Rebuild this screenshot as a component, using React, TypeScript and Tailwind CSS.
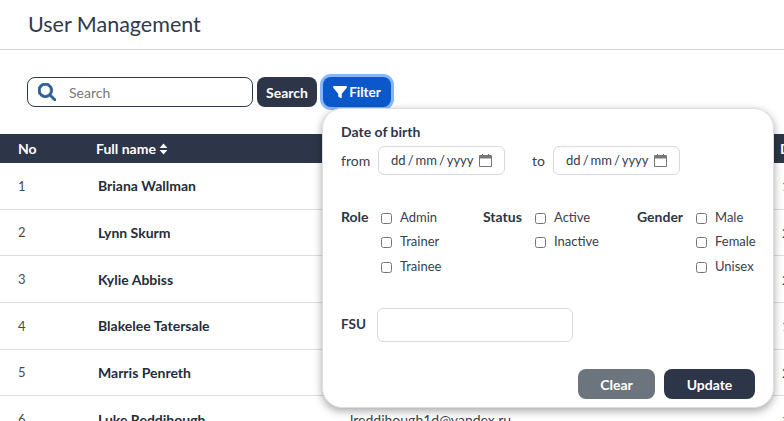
const rows = [
  { no: 1, name: 'Briana Wallman', email: '', last: '1' },
  { no: 2, name: 'Lynn Skurm', email: '', last: '2' },
  { no: 3, name: 'Kylie Abbiss', email: '', last: '2' },
  { no: 4, name: 'Blakelee Tatersale', email: '', last: '1' },
  { no: 5, name: 'Marris Penreth', email: '', last: '2' },
  { no: 6, name: 'Luke Reddihough', email: 'lreddihough1d@yandex.ru', last: '1' },
];

function SearchIcon() {
  return (
    <svg viewBox="0 0 512 512" className="w-[18px] h-[18px] fill-[#2f5f95]" stroke="#2f5f95" strokeWidth={24}>
      <path d="M416 208c0 45.900-14.900 88.300-40 122.700L502.600 457.400c12.500 12.500 12.500 32.800 0 45.300s-32.800 12.500-45.300 0L330.700 376c-34.400 25.200-76.800 40-122.700 40C93.100 416 0 322.900 0 208S93.100 0 208 0S416 93.100 416 208zM208 352a144 144 0 1 0 0-288 144 144 0 1 0 0 288z" />
    </svg>
  );
}

function FunnelIcon() {
  return (
    <svg viewBox="0 0 512 512" className="w-[14px] h-[14px] fill-white">
      <path d="M3.900 54.900C10.500 40.900 24.500 32 40 32h432c15.500 0 29.500 8.900 36.100 22.900s4.600 30.500-5.200 42.500L320 320.900V448c0 12.100-6.800 23.200-17.700 28.600s-23.800 4.300-33.500-3l-64-48c-8.100-6-12.800-15.500-12.800-25.600v-79.100L9 97.300C-.7 85.400-2.800 68.800 3.900 54.900z" />
    </svg>
  );
}

function SortIcon() {
  return (
    <svg viewBox="0 0 10 14" className="w-[9px] h-[12px] fill-white">
      <path d="M5 0.500 9.500 5.800H0.500z" />
      <path d="M5 13.500 0.500 8.200H9.500z" />
    </svg>
  );
}

function CalendarIcon() {
  return (
    <svg viewBox="0 0 13 13" className="w-[13px] h-[13px] ml-[5px] shrink-0">
      <path d="M3 0h1v2H3zM9 0h1v2H9z" fill="#666" />
      <path d="M0.500 1.500h12v11h-12z" fill="none" stroke="#777" />
      <path d="M1 2h11v2.500H1z" fill="#777" />
    </svg>
  );
}

function DateBox() {
  return (
    <div className="w-[127px] h-[29px] border border-[#d5d9e0] rounded-md flex items-center pl-[12px] text-[#333c4d] text-[13px] [word-spacing:-1.25px]">
      <span className="whitespace-pre">dd / mm / yyyy</span>
      <CalendarIcon />
    </div>
  );
}

function Check({ label }: { label: string }) {
  return (
    <label className="flex items-center h-[14px] text-[13px] text-[#39404f] whitespace-nowrap">
      <input type="checkbox" className="w-[11px] h-[11px] m-0 mr-[8px] shrink-0" />
      <span className="-mt-[1px]">{label}</span>
    </label>
  );
}

export default function App() {
  return (
    <div className="w-[784px] h-[421px] overflow-hidden bg-white font-['Lato',sans-serif] text-[#2d3648] relative">
      <header className="h-[50px] border-b border-[#d3d5d8] pl-[28px] flex items-center">
        <h1 className="text-[21.500px] text-[#2f3a4d]">User Management</h1>
      </header>

      <div className="flex items-center pl-[27px] pt-[27px] h-[84px] pb-[27px]">
        <div className="w-[226px] h-[30px] border border-[#2d3648] rounded-lg flex items-center pl-[10px]">
          <SearchIcon />
          <span className="ml-[13px] text-[14px] text-[#777]">Search</span>
        </div>
        <button className="ml-[4px] w-[60px] h-[30px] rounded-lg bg-[#2d3648] text-white text-[14px] font-bold">Search</button>
        <button className="ml-[6px] w-[68px] h-[30px] rounded-lg bg-[#0a58ca] text-white text-[13.500px] font-bold flex items-center justify-center gap-[2px] ring-[3px] ring-[#86b7fe]">
          <FunnelIcon />
          Filter
        </button>
      </div>

      <div className="h-[29px] bg-[#2d3648] flex items-center text-white text-[14px] font-bold">
        <span className="ml-[18px] w-[78px]">No</span>
        <span className="flex items-center gap-[3px]">Full name <SortIcon /></span>
        <span className="absolute left-[780px]">D</span>
      </div>

      {rows.map((r) => (
        <div key={r.no} className="h-[46.670px] border-b border-[#dcdde3] flex items-center text-[14px] relative">
          <span className="ml-[18px] w-[80px] text-[#444b58] text-[13px] pt-[1px]">{r.no}</span>
          <span className="w-[252px] font-bold text-[#262d3a]">{r.name}</span>
          <span className="text-[#3a4150]">{r.email}</span>
          <span className="absolute left-[782px] text-[#3a4150]">{r.last}</span>
        </div>
      ))}

      <div className="absolute left-[322px] top-[108px] w-[452px] h-[300px] bg-white border border-[#dcdde3] rounded-[20px] shadow-[0_3px_8px_rgba(0,0,0,0.35)] px-[18px] pt-[14px] flex flex-col">
        <div className="text-[14px] font-bold text-[#2d3648] leading-[18px]">Date of birth</div>
        <div className="flex items-center mt-[5px] text-[14px] text-[#39404f]">
          <span className="w-[37px]">from</span>
          <DateBox />
          <span className="ml-[27px] w-[21px]">to</span>
          <DateBox />
        </div>

        <div className="flex mt-[36px] text-[14px]">
          <span className="font-bold w-[40px] shrink-0 leading-[14px] -mt-[1px]">Role</span>
          <div className="w-[102px] shrink-0 flex flex-col gap-[10.500px]">
            <Check label="Admin" />
            <Check label="Trainer" />
            <Check label="Trainee" />
          </div>
          <span className="font-bold w-[52px] shrink-0 leading-[14px] -mt-[1px]">Status</span>
          <div className="w-[102px] shrink-0 flex flex-col gap-[10.500px]">
            <Check label="Active" />
            <Check label="Inactive" />
          </div>
          <span className="font-bold w-[59px] shrink-0 leading-[14px] -mt-[1px]">Gender</span>
          <div className="w-[58px] shrink-0 flex flex-col gap-[10.500px]">
            <Check label="Male" />
            <Check label="Female" />
            <Check label="Unisex" />
          </div>
        </div>

        <div className="flex items-center mt-[33.500px]">
          <span className="w-[36px] text-[13.500px] font-bold">FSU</span>
          <div className="w-[196px] h-[34px] border border-[#d5d9e0] rounded-md" />
        </div>

        <div className="flex justify-end gap-[9px] mt-[27px]">
          <button className="w-[77px] h-[30px] rounded-lg bg-[#6c757d] text-white text-[14px] font-bold pt-[1px]">Clear</button>
          <button className="w-[91px] h-[30px] rounded-lg bg-[#2d3648] text-white text-[14px] font-bold pt-[1px]">Update</button>
        </div>
      </div>
    </div>
  );
}
